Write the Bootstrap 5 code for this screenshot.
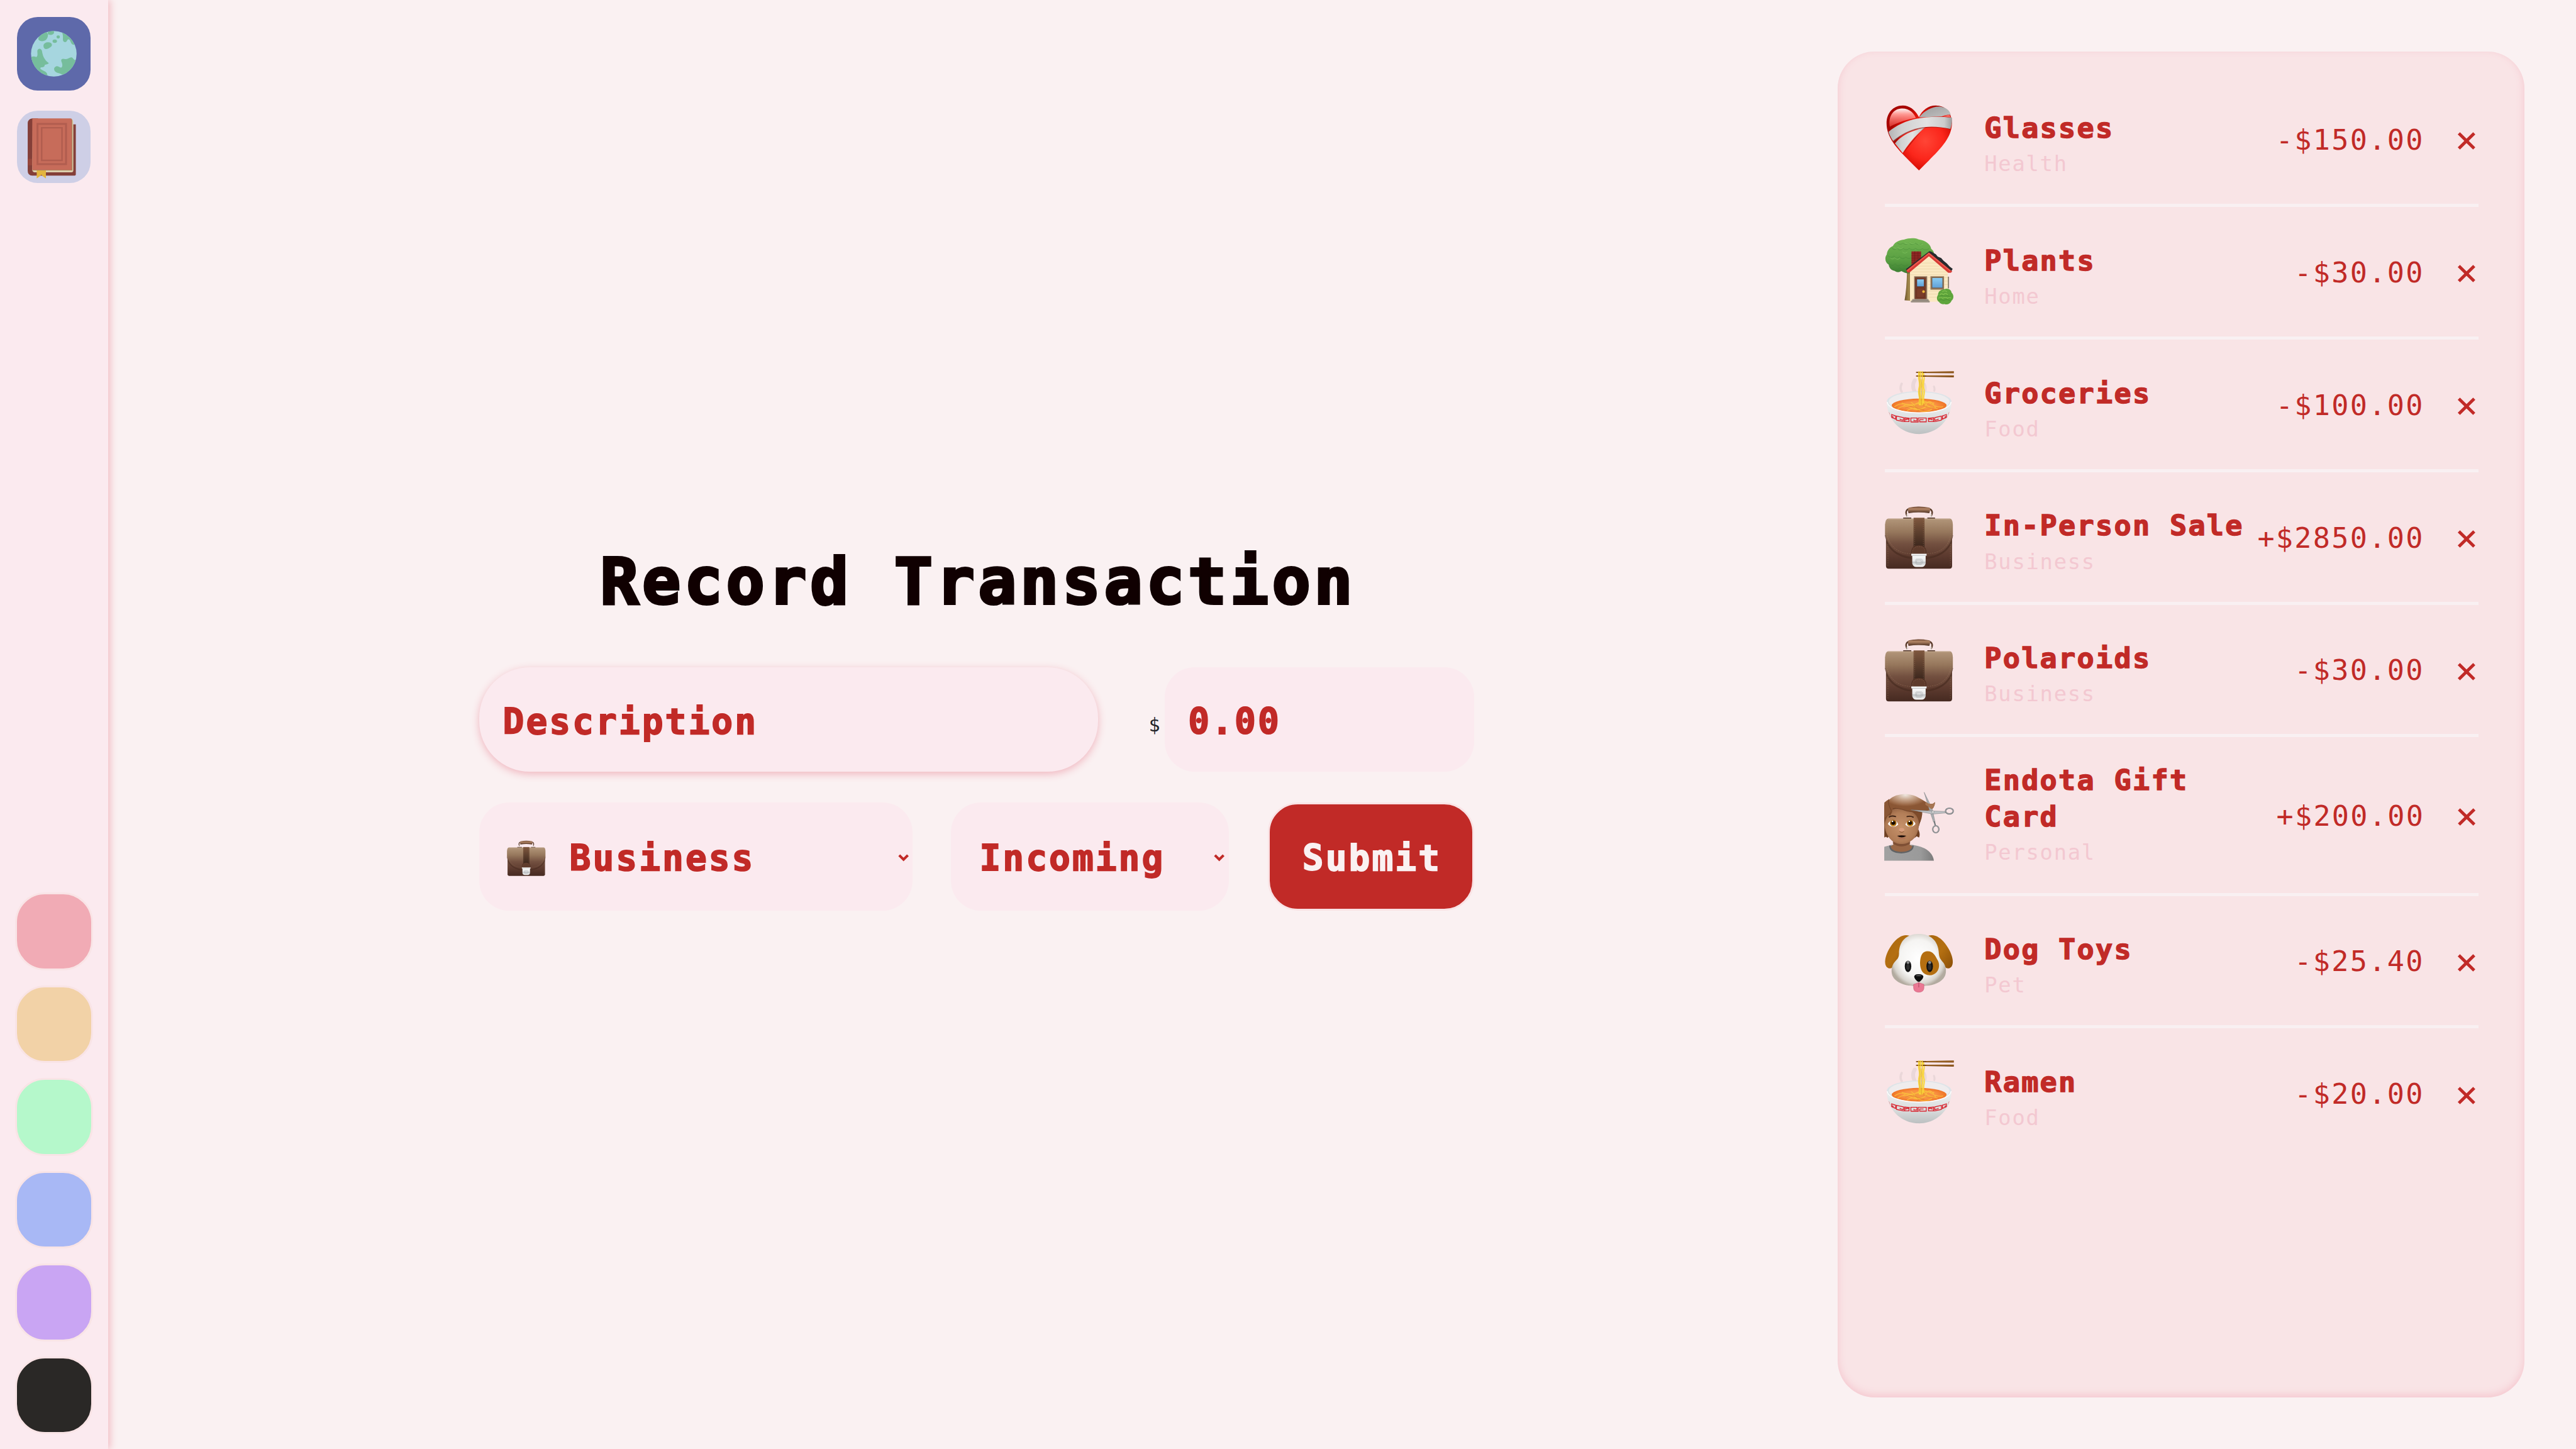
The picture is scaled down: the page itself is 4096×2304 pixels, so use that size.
<!DOCTYPE html>
<html lang="en">
<head>
<meta charset="utf-8">
<title>Record Transaction</title>
<link href="https://cdn.jsdelivr.net/npm/bootstrap@5.3.0/dist/css/bootstrap.min.css" rel="stylesheet">
<style>
:root{--u:calc(4096px / 4480);}
html,body{height:100%;margin:0;overflow:hidden}
body{background:#faf1f2;color:#212529;font-family:"DejaVu Sans Mono","Liberation Mono",monospace}
svg{display:block;overflow:visible}
.ink{color:#c12a27}
.rail{width:calc(188*var(--u));background:#fbeaef;box-shadow:calc(4*var(--u)) 0 calc(12*var(--u)) #f2bdc4;padding:calc(30*var(--u)) 0 calc(26*var(--u))}
.app-tile{width:calc(128*var(--u));height:calc(128*var(--u));border-radius:calc(36*var(--u));margin-bottom:calc(34*var(--u));padding:0;border:0}
.tile-world{background:#5e69aa}
.tile-book{background:#cecfe6;height:calc(126*var(--u))}
.swatches{gap:calc(26.4*var(--u))}
.swatch{width:calc(136*var(--u));height:calc(135*var(--u));border:calc(4*var(--u)) solid #f9e4e6;border-radius:calc(52*var(--u));padding:0}
.stage{padding-left:calc(13*var(--u))}
.entry{width:calc(1730*var(--u))}
.headline{font-size:calc(111.500*var(--u));line-height:calc(152*var(--u));margin:0 0 calc(72*var(--u));padding-left:calc(5*var(--u));color:#100001;font-weight:700;letter-spacing:calc(5.900*var(--u));-webkit-text-stroke:calc(4.500*var(--u)) #100001;white-space:nowrap}
.field,.field:focus{background:#fbeaef;border:0;border-radius:calc(52*var(--u));font-weight:700;font-size:calc(61.500*var(--u));letter-spacing:calc(3.300*var(--u));line-height:1.2;color:#c12a27;-webkit-text-stroke:calc(2*var(--u)) #c12a27;padding:calc(8*var(--u)) calc(41*var(--u)) 0;box-shadow:none}
.field::placeholder{color:#c12a27;opacity:1}
.line-a{height:calc(182*var(--u));margin-bottom:calc(54*var(--u))}
.line-b{height:calc(188*var(--u))}
.f-desc,.f-desc:focus{width:calc(1076*var(--u));border-radius:calc(88*var(--u));box-shadow:0 calc(4*var(--u)) calc(14*var(--u)) #f0b5be}
.f-amt{width:calc(538*var(--u))}
.cur{font-size:calc(33*var(--u));padding-top:calc(20*var(--u));margin-right:calc(8*var(--u))}
.picker{padding:calc(6*var(--u)) calc(7*var(--u)) 0 calc(48*var(--u))}
.f-cat{width:calc(754*var(--u));margin-right:calc(66*var(--u))}
.f-dir{width:calc(484*var(--u));padding-left:calc(50*var(--u))}
.mini{width:calc(68*var(--u));height:calc(68*var(--u));margin-right:calc(41*var(--u));margin-top:calc(-4*var(--u))}
.chev{width:calc(19*var(--u));height:calc(12*var(--u));margin-top:calc(-4*var(--u))}
.send,.send:hover{width:calc(358*var(--u));background:#c12a27;color:#faf1f2;border:calc(4*var(--u)) solid #f9e3e5;border-radius:calc(52*var(--u));font-weight:700;font-size:calc(61.500*var(--u));letter-spacing:calc(3.300*var(--u));-webkit-text-stroke:calc(2*var(--u)) #faf1f2;line-height:1.2;padding:calc(6*var(--u)) 0 0 calc(3*var(--u))}
.ledger{width:calc(1194*var(--u));margin:calc(90*var(--u));margin-left:0;padding:calc(39.4*var(--u)) calc(80*var(--u)) 0 calc(82*var(--u));background:#f9e4e6;border-radius:calc(64*var(--u));box-shadow:inset 0 calc(-4*var(--u)) calc(14*var(--u)) #f5c6ce}
.tx{height:calc(230.6*var(--u));border-bottom:calc(6*var(--u)) solid #f9f0f2}
.tx:last-child{border-bottom-color:transparent}
.tx-tall{height:calc(275.8*var(--u))}
.pic{width:calc(120*var(--u));height:calc(120*var(--u));margin-right:calc(53*var(--u));margin-top:calc(-4*var(--u))}
.what{padding-top:calc(62*var(--u));min-width:0}
.tx-tall .what{padding-top:calc(43.5*var(--u))}
.what-name{font-weight:700;font-size:calc(49.400*var(--u));line-height:calc(63.5*var(--u));letter-spacing:calc(2.500*var(--u));-webkit-text-stroke:calc(1.600*var(--u)) #c12a27}
.what-cat{font-size:calc(37*var(--u));line-height:calc(60.2*var(--u));letter-spacing:calc(1.900*var(--u));color:#f3c8d1}
.sum{font-size:calc(49.400*var(--u));letter-spacing:calc(2.500*var(--u));padding-top:calc(4*var(--u))}
.drop{width:calc(41*var(--u));margin-left:calc(53*var(--u));font-size:calc(67*var(--u));line-height:1;padding-top:calc(3*var(--u));border:0;background:none;padding-left:0;padding-right:0}
</style>
<script src="https://cdn.jsdelivr.net/npm/bootstrap@5.3.0/dist/js/bootstrap.bundle.min.js"></script>
</head>
<body class="d-flex">
<svg width="0" height="0" class="position-absolute" aria-hidden="true">
<defs>
<radialGradient id="gHeart" gradientUnits="userSpaceOnUse" cx="235" cy="225" r="190"><stop offset="0" stop-color="#ff4536"/><stop offset=".5" stop-color="#fb261b"/><stop offset=".8" stop-color="#d80e05"/><stop offset="1" stop-color="#a80500"/></radialGradient>
<linearGradient id="gShine" x1="0" y1="0" x2="0" y2="1"><stop offset="0" stop-color="#fff" stop-opacity=".95"/><stop offset=".3" stop-color="#ff9c96"/><stop offset="1" stop-color="#f8504a" stop-opacity=".6"/></linearGradient>
<linearGradient id="gBand" x1="0" y1="0" x2="1" y2="0"><stop offset="0" stop-color="#b3b3b3"/><stop offset=".2" stop-color="#d0d0d0"/><stop offset=".6" stop-color="#e2e2e2"/><stop offset=".88" stop-color="#cbcbcb"/><stop offset="1" stop-color="#9c9c9c"/></linearGradient>
<linearGradient id="gBand2" x1="0" y1="0" x2="1" y2="1"><stop offset="0" stop-color="#9c9c9c"/><stop offset="1" stop-color="#c2c2c2"/></linearGradient>
<linearGradient id="gTree" x1="0" y1="0" x2="0" y2="1"><stop offset="0" stop-color="#72b551"/><stop offset=".6" stop-color="#5ba043"/><stop offset="1" stop-color="#3b7c31"/></linearGradient>
<linearGradient id="gTrunk" x1="0" y1="0" x2="1" y2="0"><stop offset="0" stop-color="#6b522c"/><stop offset=".5" stop-color="#a3884b"/><stop offset="1" stop-color="#6c5430"/></linearGradient>
<linearGradient id="gPane" x1="0" y1="0" x2="0" y2="1"><stop offset="0" stop-color="#8ccdf3"/><stop offset="1" stop-color="#5f9fd6"/></linearGradient>
<linearGradient id="gBowl" x1="0" y1="0" x2="0" y2="1"><stop offset="0" stop-color="#eef0f1"/><stop offset=".55" stop-color="#dcdfdf"/><stop offset="1" stop-color="#bcc0c1"/></linearGradient>
<radialGradient id="gSoup"><stop offset="0" stop-color="#f39a3f"/><stop offset=".6" stop-color="#f99343"/><stop offset="1" stop-color="#ef7426"/></radialGradient>
<linearGradient id="gFlap" x1="0" y1="0" x2="0" y2="1"><stop offset="0" stop-color="#b2967a"/><stop offset=".35" stop-color="#96775c"/><stop offset=".65" stop-color="#735040"/><stop offset="1" stop-color="#5c3a2e"/></linearGradient>
<linearGradient id="gCase" x1="0" y1="0" x2="0" y2="1"><stop offset="0" stop-color="#7a5a47"/><stop offset=".6" stop-color="#603d31"/><stop offset="1" stop-color="#462a21"/></linearGradient>
<linearGradient id="gStrap" x1="0" y1="0" x2="0" y2="1"><stop offset="0" stop-color="#7f583f"/><stop offset="1" stop-color="#37231a"/></linearGradient>
<linearGradient id="gGrip" x1="0" y1="0" x2="0" y2="1"><stop offset="0" stop-color="#6a4430"/><stop offset=".35" stop-color="#b48666"/><stop offset="1" stop-color="#4d3022"/></linearGradient>
<linearGradient id="gLock" x1="0" y1="0" x2="0" y2="1"><stop offset="0" stop-color="#fff"/><stop offset=".55" stop-color="#e3e5e6"/><stop offset=".6" stop-color="#bfc3c5"/><stop offset="1" stop-color="#fafafa"/></linearGradient>
<radialGradient id="gFace" gradientUnits="userSpaceOnUse" cx="110" cy="220" r="115"><stop offset="0" stop-color="#c6926b"/><stop offset=".65" stop-color="#b27d57"/><stop offset="1" stop-color="#8b5a3c"/></radialGradient>
<radialGradient id="gHair" gradientUnits="userSpaceOnUse" cx="132" cy="52" r="120" gradientTransform="translate(0 26) scale(1 .5)"><stop offset="0" stop-color="#efe7e0"/><stop offset=".4" stop-color="#c9a88f"/><stop offset=".85" stop-color="#9c6a48"/><stop offset="1" stop-color="#8a5634"/></radialGradient>
<linearGradient id="gShirt" x1="0" y1="0" x2="1" y2="0"><stop offset="0" stop-color="#a2a2a2"/><stop offset=".75" stop-color="#9a9a9a"/><stop offset="1" stop-color="#7b7b7b"/></linearGradient>
<radialGradient id="gDog" gradientUnits="userSpaceOnUse" cx="200" cy="905" r="150"><stop offset="0" stop-color="#fff"/><stop offset=".65" stop-color="#f5f4f2"/><stop offset=".88" stop-color="#d9d5cf"/><stop offset="1" stop-color="#b3aba0"/></radialGradient>
<linearGradient id="gEar" x1="0" y1="0" x2="1" y2="1"><stop offset="0" stop-color="#a9680f"/><stop offset=".5" stop-color="#b46f11"/><stop offset="1" stop-color="#8a4f08"/></linearGradient>
<clipPath id="cHead"><path d="M21 0H400V396H21Z"/></clipPath>
<clipPath id="cGlobe"><circle cx="282" cy="282" r="119"/></clipPath>
<clipPath id="cBowl"><path d="M36 205C36 300 110 374 202 374S370 300 370 205C370 240 290 266 202 266S36 240 36 205Z"/></clipPath>

<symbol id="heart" viewBox="24 30 360 360" overflow="visible">
<path fill="url(#gHeart)" d="M202 100C185 65 155 39 118 39C65 39 33 80 33 132C33 222 110 285 202 378C290 288 374 220 374 132C374 75 340 39 290 39C250 39 218 64 202 100Z"/>
<path fill="url(#gShine)" d="M50 150C40 95 70 56 112 55C152 54 174 78 186 104C140 112 92 127 50 150Z"/>
<path fill="#a60b05" d="M68 222L110 192L86 228L73 238Z"/>
<path fill="#f9625a" d="M322 95L362 87L368 101Z"/>
<path fill="url(#gBand2)" d="M203 101C230 64 280 40 318 46C345 50 364 66 368 87C350 88 335 90 322 96Z"/>
<path fill="#8f0800" opacity=".6" d="M118 291C152 236 192 194 234 152L226 158Z"/>
<path fill="url(#gBand)" d="M77 237C110 195 160 170 232 155C190 190 150 232 117 287Z"/>
<path fill="none" stroke="#6a6a6a" stroke-width="3" d="M68 226C110 188 170 160 232 154"/>
<path fill="none" stroke="#9c0d06" stroke-width="3" d="M232 154C280 149 330 151 366 163"/>
<path fill="url(#gBand)" d="M43 177C110 120 210 86 374 102C376 124 372 146 366 161C260 138 160 145 67 224C56 208 48 192 43 177Z"/>
</symbol>

<symbol id="house" viewBox="24 722 360 360" overflow="visible">
<path fill="url(#gTrunk)" d="M140 900H170V1062L127 1058Q138 1000 140 900Z"/>
<path fill="url(#gTree)" d="M75 905C50 900 46 882 44 872C25 862 22 835 34 820C36 795 52 780 66 775C80 750 105 744 124 742C150 732 185 732 205 742C235 746 262 765 266 790C280 800 284 815 278 830L160 916C140 922 125 914 110 906C98 914 85 912 75 905Z"/>
<g fill="none" stroke="#3f8536" stroke-width="3" opacity=".5"><path d="M40 825q15 18 32 2q12 20 30 4q14 18 32 2q12 12 26 4"/><path d="M60 785q14 16 28 2q14 18 32 0q14 16 32 0q16 16 32 0q16 16 36 2q18 12 34 0"/><path d="M48 868q16 16 30 0q14 20 32 2q16 18 36 2"/><path d="M90 760q14 12 28 0q16 14 32 0q16 14 32 0q18 14 34 4"/><path d="M76 900q14 4 24-12q14 16 36 4"/></g>
<path fill="none" stroke="#8bca68" stroke-width="2.500" opacity=".7" d="M70 780q12 14 24 2q14 14 26 0M128 758q14 12 28 0q14 12 26 0M52 836q12 14 24 0q14 16 26 2M196 764q14 10 26 2M116 806q12 12 26 0"/>
<path fill="#8e2823" d="M163 803H213V850L163 884Z"/><path stroke="#6b1a19" stroke-width="2" fill="none" d="M163 814H213M163 826H213M163 838H213M163 850H210M163 862H195M180 803V870M197 803V850"/>
<path fill="#fbe8c2" d="M155 905L254 824L353 905V1066H155Z"/>
<path fill="none" stroke="#e6cf9f" stroke-width="2" d="M212 864H298M192 880H316M174 895H335M157 910H353M157 925H353M250 940H262M335 940H353M250 958H262M335 958H353M250 976H262M335 976H353M250 994H262M250 1010H310M250 1026H300M250 1042H300"/>
<path fill="#8b7c67" d="M353 935H359V996H353Z"/>
<path fill="#262b2e" d="M134 896L256 802L266 804L290 818L300 830L318 838L330 852L348 866L362 882L378 894L370 908L254 818L140 908Z"/>
<path fill="#d83b35" d="M136 902L254 808L376 908L368 915H355L254 829L152 914H142Z"/><path fill="none" stroke="#f0685a" stroke-width="4" d="M142 904L254 814L366 906"/>
<path fill="#8f7259" d="M177 933H245V1053H177Z"/><path fill="#7a3c29" d="M183 940H237V1052H183Z"/><path fill="none" stroke="#5b2b1e" stroke-width="2" d="M190 994H230V1044H190ZM183 940H237V1052H183Z"/>
<path fill="url(#gPane)" stroke="#4c2419" stroke-width="2" d="M191 948H229V987H191Z"/><circle cx="226" cy="1013" r="7" fill="#edb83b"/>
<path fill="#95785a" d="M262 933H333V1003H262Z"/><path fill="url(#gPane)" stroke="#6e5541" stroke-width="3" d="M270 940H326V994H270Z"/>
<path fill="#a0958a" d="M167 1052H252V1060H258V1070H160V1060H167Z"/><path stroke="#746a61" stroke-width="2" d="M165 1060H254"/>
<path fill="#5fa53c" d="M308 1068C292 1058 294 1040 302 1030C300 1012 320 1000 336 1000C352 992 372 1004 372 1018C386 1030 384 1052 372 1060C368 1076 346 1084 336 1078C324 1080 312 1076 308 1068Z"/>
<path fill="none" stroke="#8fcc57" stroke-width="4" opacity=".8" d="M310 1030q10-12 20 0q10-14 22 0M304 1048q12-12 22 0q14-12 26 0q10-10 18 0M324 1014q12-10 24 0"/><path fill="none" stroke="#3b7d2b" stroke-width="3" opacity=".6" d="M304 1060q14-10 26 0q14-10 34 0M312 1038q14-10 26 0q12-8 26 2"/>
</symbol>

<symbol id="ramen" viewBox="24 34 360 360" overflow="visible">
<g fill="none" stroke="#8c8589" stroke-linecap="round" opacity=".13"><path stroke-width="12" d="M112 155q-12-18 0-42"/><path stroke-width="20" d="M178 150q-14-28 2-55"/><path stroke-width="10" d="M236 150q4-20-4-36M282 150q4-10-2-22"/></g>
<ellipse cx="203" cy="207" rx="169" ry="55" fill="#dde4e8"/>
<ellipse cx="203" cy="206" rx="158" ry="49" fill="#efeced"/>
<ellipse cx="203" cy="227" rx="143" ry="36" fill="url(#gSoup)"/>
<g fill="none" stroke="#fbc93c" stroke-width="4" opacity=".75"><path d="M74 234q30-24 60-12t60-8t70 4t64 14M90 244q40-26 70-6t60 4t80 2M112 214q40 16 80 4t90-4M140 254q30-22 60-4t70-4M120 230q20-20 60 6t60-14t50 20M160 210q24 10 20 40M226 210q20 26 60 30"/></g>
<g fill="none" stroke="#c8621d" stroke-width="2" opacity=".6"><path d="M130 240q40-20 70 8M214 220q30 26 70 18M170 225q20 20 60 24M190 258q14-12 40-4"/></g>
<path fill="url(#gBowl)" d="M34 205C34 302 108 376 202 376S372 302 372 205C370 244 292 268 202 268S38 244 34 205Z"/>
<path fill="none" stroke="#fbfcfc" stroke-width="5" d="M36 208C42 244 118 265 202 265S366 244 370 208"/>
<g fill="none" stroke="#d9232e" stroke-width="4.500" clip-path="url(#cBowl)">
<path d="M160 314V292H192V306H176V301M160 313H198V292M198 292H240V312H206V301H226"/>
<path d="M84 303L85 282L122 290V304L104 300V296M84 303L122 311H150V298H134V304M128 311V291L154 294"/>
<path d="M320 303L319 282L284 290V304L302 300V296M320 303L284 311H252V298H270V304M278 311V291L248 294"/>
<path d="M44 262L52 286L80 298V281L60 274V284L70 288M361 262L353 286L325 298V281L345 274V284L335 288"/>
</g>
<path fill="none" stroke="#e5a91f" stroke-width="30" opacity=".3" d="M216 90V225"/>
<g fill="none" stroke="#fbd83a" stroke-width="5.500"><path d="M202 50q-5 20 0 45t0 40t2 50v40"/><path d="M210 50q-6 20 0 45t0 40t0 45v46"/><path d="M219 50q5 24 2 45t0 40t-2 45v46"/><path d="M222 50q12 25 6 48t0 40t-2 45v34"/></g>
<path fill="none" stroke="#c9901b" stroke-width="1.500" d="M206 60q-5 18 0 40t0 38t1 45v34M215 60v40q4 20 0 40v80"/>
<path fill="#7b4611" d="M187 51L384 48V59L187 57ZM187 70L384 69V80L187 76Z"/><path stroke="#b98036" stroke-width="2.500" d="M240 52.500H384M240 72.500H384"/>
<path stroke="#fbd83a" stroke-width="5" d="M202 48V80M210 48V80M219 48V80"/>
</symbol>

<symbol id="case" viewBox="24 728 360 360" overflow="visible">
<path fill="none" stroke="#5b3c2b" stroke-width="8" d="M141 806C128 785 138 770 150 768M265 806C278 785 268 770 256 768"/>
<path fill="#4a3023" d="M120 813H162V820H120ZM246 813H286V820H246Z"/><path stroke="#e3ded8" stroke-width="6" d="M141 794V812M265 794V812"/>
<path fill="url(#gGrip)" d="M148 762Q202 750 258 762Q263 776 256 790Q202 782 148 790Q142 776 148 762Z"/>
<path fill="url(#gCase)" d="M30 880H375V1066Q375 1080 361 1080H44Q30 1080 30 1066Z"/>
<path fill="#3b2319" opacity=".45" d="M31 930C70 1000 120 1024 203 1024S336 1000 374 930V945C340 1010 280 1030 203 1030S66 1010 31 945Z"/>
<path fill="url(#gFlap)" d="M42 818H364Q378 820 379 850V900C376 940 350 975 320 995C280 1016 240 1020 203 1020S126 1016 86 995C56 975 30 940 25 900V850Q27 820 42 818Z"/>
<path fill="none" stroke="#4a2d21" stroke-width="2" d="M25 905C32 940 56 975 86 995C126 1016 166 1020 203 1020S280 1016 320 995C350 975 374 940 379 905"/>
<path fill="none" stroke="#b79474" stroke-width="2" stroke-dasharray="7 5" opacity=".5" d="M36 826V905C46 950 76 980 110 993C150 1008 250 1008 296 993C330 980 360 950 368 905V826M40 950V1066M366 950V1066"/>
<path fill="#d9c1a5" opacity=".5" d="M40 819H366V822H40Z"/>
<path fill="url(#gStrap)" d="M174 814H231V975H174Z"/><path fill="none" stroke="#b08a68" stroke-width="2" stroke-dasharray="6 5" opacity=".6" d="M180 824V966M225 824V966"/>
<path fill="#5e3b2c" stroke="#482a1f" stroke-width="2" d="M164 1004V985Q168 958 202 958Q234 958 239 985V1004Z"/><path fill="none" stroke="#9a755a" stroke-width="2" stroke-dasharray="6 5" opacity=".6" d="M170 1000V986Q176 965 202 965Q228 965 233 986V1000"/>
<path fill="url(#gLock)" d="M167 1006H237V1052Q234 1071 215 1071H189Q170 1071 167 1052Z"/><path fill="#f4f4f4" d="M162 1002H242V1012H162Z"/><path fill="none" stroke="#a1a5a7" stroke-width="2" d="M167 1012H237M188 1030H216L221 1036V1050L214 1058H190L184 1050V1036ZM190 1036H214V1052H190Z"/>
</symbol>

<symbol id="haircut" viewBox="24 -30 360 360" overflow="visible">
<g clip-path="url(#cHead)">
<path fill="#6f4023" d="M21 110H214Q214 200 196 226Q212 258 202 274L190 268L180 276L170 262H50L38 276L30 270L21 274Z"/>
<path fill="url(#gShirt)" d="M0 396V328Q40 318 58 312H166Q230 322 256 348Q278 370 280 396Z"/>
<path fill="#9a6746" d="M68 285H154V312L172 322Q164 350 110 352Q56 350 50 322L68 312Z"/>
<path fill="none" stroke="#616365" stroke-width="8" d="M51 316Q50 350 110 353Q170 350 171 316"/>
<path fill="#6c3f28" opacity=".6" d="M66 290Q110 326 156 290V306Q110 334 66 306Z"/>
<path fill="url(#gFace)" d="M21 150Q110 90 200 150Q212 230 180 275Q150 308 112 308Q64 308 38 262Q24 240 21 200Z"/>
<path fill="#7d4b2b" d="M21 104Q45 90 60 95L62 140L54 158L40 160Q26 180 21 210ZM166 130H220Q220 182 202 205Q202 164 166 140Z"/>
<path fill="url(#gHair)" d="M42 84C60 55 105 46 140 48C190 52 220 80 252 96Q272 104 286 90Q284 122 262 132C215 142 170 144 140 136C110 126 80 116 66 124L60 138Q44 120 42 84Z"/>
<path fill="#8a5635" d="M21 92Q32 82 46 74Q40 104 58 134L48 150L30 166L21 172Z"/><path fill="none" stroke="#6d4126" stroke-width="3" d="M46 74Q38 100 58 134M66 124Q84 116 140 136Q180 144 214 140"/>
</g>
<path fill="none" stroke="#3c2114" stroke-width="6" stroke-linecap="round" d="M47 167Q60 158 80 165M140 165Q158 160 172 168"/>
<path fill="#fff" d="M40 203Q50 184 70 183Q88 187 94 206Q84 218 66 218Q48 216 40 203ZM131 206Q140 186 158 183Q178 186 184 203Q176 216 158 218Q140 218 131 206Z"/>
<circle cx="68" cy="199" r="17" fill="#9a5d08"/><circle cx="156" cy="199" r="17" fill="#9a5d08"/><circle cx="68" cy="198" r="10" fill="#140a02"/><circle cx="156" cy="198" r="10" fill="#140a02"/><circle cx="64" cy="190" r="4" fill="#fff"/><circle cx="152" cy="190" r="4" fill="#fff"/><path fill="none" stroke="#e0a02c" stroke-width="4" d="M58 209Q68 217 78 208M146 209Q156 217 166 208"/>
<ellipse cx="112" cy="234" rx="14" ry="10" fill="#d79c7c"/><path fill="none" stroke="#87502f" stroke-width="3" d="M100 242Q112 252 124 242"/>
<path fill="#1c0c08" d="M88 265Q112 260 136 265Q112 282 88 265Z"/><path fill="none" stroke="#b06e57" stroke-width="4" d="M94 276Q112 286 132 275"/>
<path fill="#a9adb0" stroke="#6e7275" stroke-width="1.500" d="M229 38L270 120L286 192L278 194L256 128Z"/>
<path fill="#a67552" d="M236 90L252 96Q272 104 286 90Q284 118 266 126Q250 110 236 104Z"/>
<path fill="#bdc1c4" stroke="#6e7275" stroke-width="1.500" d="M160 130L276 136L340 138V146L274 152Q210 140 160 130Z"/>
<circle cx="275" cy="141" r="6" fill="#e7e9ea" stroke="#777" stroke-width="2"/>
<ellipse cx="361" cy="136" rx="20" ry="15" fill="none" stroke="#74787b" stroke-width="7"/><ellipse cx="290" cy="231" rx="16" ry="18" fill="none" stroke="#74787b" stroke-width="7"/><path stroke="#74787b" stroke-width="7" d="M282 190L288 214"/>
<ellipse cx="361" cy="135" rx="20" ry="15" fill="none" stroke="#c3c6c8" stroke-width="2"/><ellipse cx="290" cy="230" rx="16" ry="18" fill="none" stroke="#c3c6c8" stroke-width="2"/>
</symbol>

<symbol id="dog" viewBox="24 731 360 360" overflow="visible">
<path fill="url(#gEar)" d="M152 786C120 776 90 796 66 826C38 862 20 906 27 936C33 958 52 960 62 953L112 900Z"/>
<path fill="url(#gEar)" d="M252 786C284 776 314 796 338 826C366 862 384 906 377 936C371 958 352 960 342 953L292 900Z"/>
<path fill="url(#gDog)" d="M201 777C262 777 304 812 306 880C308 905 320 915 332 930C344 948 346 975 338 996C322 1030 276 1046 240 1047C220 1053 180 1053 162 1047C126 1046 80 1030 64 996C56 975 58 948 70 930C84 912 98 905 98 880C98 812 140 777 201 777Z"/>
<path fill="#b46f11" d="M246 867C282 867 290 900 302 918C316 950 300 990 258 993C220 992 206 960 208 922C210 888 222 867 246 867Z"/>
<ellipse cx="145" cy="946" rx="17" ry="30" fill="#111"/><ellipse cx="258" cy="946" rx="17" ry="30" fill="#111"/><ellipse cx="145" cy="926" rx="8" ry="8" fill="#8c8c8c"/><ellipse cx="258" cy="926" rx="8" ry="8" fill="#8c8c8c"/><ellipse cx="145" cy="950" rx="9" ry="16" fill="#2e2e2e"/><ellipse cx="258" cy="950" rx="9" ry="16" fill="#2e2e2e"/>
<path fill="#ea7893" stroke="#c95b77" stroke-width="2" d="M174 1040Q188 1036 201 1030Q214 1036 228 1040V1060Q226 1081 201 1081Q176 1081 174 1060Z"/><path stroke="#b94f69" stroke-width="4" fill="none" d="M201 1032V1056"/>
<path fill="#0d0d0d" d="M177 999Q180 987 201 987Q222 987 225 999Q224 1010 208 1025Q201 1030 194 1025Q178 1010 177 999Z"/><path fill="#5a5a5a" d="M184 996Q201 986 218 996Q201 1000 184 996Z"/>
</symbol>
</defs>
</svg>

<nav class="rail d-flex flex-column align-items-center flex-shrink-0 h-100">
  <button class="app-tile tile-world d-flex align-items-center justify-content-center" aria-label="World">
    <svg style="width:62.5%" viewBox="162 162 240 240"><circle cx="282" cy="282" r="119" fill="#a6d6df"/>
    <g clip-path="url(#cGlobe)" fill="#76bd9c"><path d="M150 310C165 294 180 294 190 299C200 296 196 280 196 266C198 254 214 250 220 266C224 290 230 312 256 330C252 338 240 336 234 340C236 350 226 352 214 353C206 360 220 366 232 372C244 378 250 384 248 400H150Z"/><path d="M202 208C198 200 210 180 230 165H250C253 185 252 196 243 207C232 219 208 218 202 208ZM246 172C254 190 282 184 283 172V160H250Z"/><path d="M228 240C228 226 244 220 256 222C270 224 276 234 270 242C262 250 250 257 240 257C232 256 228 250 228 240Z"/><ellipse cx="287" cy="216" rx="11.500" ry="9"/><ellipse cx="305" cy="194" rx="8.500" ry="8"/><path d="M322 165C334 184 328 200 330 212C334 224 348 224 352 211C358 202 366 208 370 220C374 232 384 240 398 232L380 170Z"/><path d="M400 316C388 318 384 306 376 301C366 298 356 310 342 310C330 306 318 308 321 320C326 332 330 346 322 353C314 356 308 347 298 347C286 349 280 360 286 370C296 384 316 382 330 392L400 380Z"/></g></svg>
  </button>
  <button class="app-tile tile-book" aria-label="Ledger">
    <svg class="w-100 h-100" viewBox="90 576 384 378"><path fill="#843f38" d="M170 616H200V647H397V909Q397 915 391 915H170Q146 913 146 890V640Q148 618 170 616Z"/><path fill="#96463b" d="M146 827H170V861H146Z"/><path fill="#dccfad" d="M172 620H376Q384 624 384 634V888Q384 898 374 898H180Q172 896 170 888Z"/><path fill="#a58a5e" d="M372 616Q378 618 379 628V888H172V884H372Z"/><path fill="#c76c5a" d="M170 616H370Q376 618 376 624V885H170Z"/><path fill="none" stroke="#b15d4f" stroke-width="10" d="M197 645H346V855H197Z"/><path fill="none" stroke="#b15d4f" stroke-width="8" d="M219 665H325V835H219Z"/><path fill="#e3b53f" d="M193 888H241V930L217 912L193 930Z"/><path fill="#843f38" d="M213 914Q217 908 222 914Z"/></svg>
  </button>
  <div class="swatches d-flex flex-column mt-auto">
    <button class="swatch" style="background:#f1abb5" aria-label="Rose"></button>
    <button class="swatch" style="background:#f2d2a7" aria-label="Sand"></button>
    <button class="swatch" style="background:#b5f8cb" aria-label="Mint"></button>
    <button class="swatch" style="background:#a8b8f5" aria-label="Sky"></button>
    <button class="swatch" style="background:#c9a5f3" aria-label="Lilac"></button>
    <button class="swatch" style="background:#2a2826" aria-label="Dark"></button>
  </div>
</nav>

<main class="stage flex-fill d-flex flex-column align-items-center justify-content-center h-100">
  <form class="entry">
    <h1 class="headline text-center">Record Transaction</h1>
    <div class="line-a d-flex align-items-stretch">
      <input class="field f-desc form-control" type="text" placeholder="Description">
      <div class="d-flex align-items-center ms-auto h-100">
        <span class="cur">$</span>
        <input class="field f-amt form-control h-100" type="text" placeholder="0.00">
      </div>
    </div>
    <div class="line-b d-flex align-items-stretch">
      <button type="button" class="field picker f-cat d-flex align-items-center">
        <svg class="mini"><use href="#case"/></svg>Business
        <svg class="chev ms-auto" viewBox="0 0 19 12"><path d="M2 2L9.500 9.500L17 2" fill="none" stroke="#c12a27" stroke-width="4.500"/></svg>
      </button>
      <button type="button" class="field picker f-dir d-flex align-items-center">Incoming
        <svg class="chev ms-auto" viewBox="0 0 19 12"><path d="M2 2L9.500 9.500L17 2" fill="none" stroke="#c12a27" stroke-width="4.500"/></svg>
      </button>
      <button type="button" class="send ms-auto">Submit</button>
    </div>
  </form>
</main>

<aside class="ledger ink flex-shrink-0">
  <div class="tx d-flex align-items-center"><svg class="pic flex-shrink-0"><use href="#heart"/></svg><div class="what flex-fill align-self-start"><div class="what-name">Glasses</div><div class="what-cat">Health</div></div><div class="sum text-nowrap">-$150.00</div><button class="drop ink">×</button></div>
  <div class="tx d-flex align-items-center"><svg class="pic flex-shrink-0"><use href="#house"/></svg><div class="what flex-fill align-self-start"><div class="what-name">Plants</div><div class="what-cat">Home</div></div><div class="sum text-nowrap">-$30.00</div><button class="drop ink">×</button></div>
  <div class="tx d-flex align-items-center"><svg class="pic flex-shrink-0"><use href="#ramen"/></svg><div class="what flex-fill align-self-start"><div class="what-name">Groceries</div><div class="what-cat">Food</div></div><div class="sum text-nowrap">-$100.00</div><button class="drop ink">×</button></div>
  <div class="tx d-flex align-items-center"><svg class="pic flex-shrink-0"><use href="#case"/></svg><div class="what flex-fill align-self-start"><div class="what-name">In-Person Sale</div><div class="what-cat">Business</div></div><div class="sum text-nowrap">+$2850.00</div><button class="drop ink">×</button></div>
  <div class="tx d-flex align-items-center"><svg class="pic flex-shrink-0"><use href="#case"/></svg><div class="what flex-fill align-self-start"><div class="what-name">Polaroids</div><div class="what-cat">Business</div></div><div class="sum text-nowrap">-$30.00</div><button class="drop ink">×</button></div>
  <div class="tx tx-tall d-flex align-items-center"><svg class="pic flex-shrink-0"><use href="#haircut"/></svg><div class="what flex-fill align-self-start"><div class="what-name">Endota Gift Card</div><div class="what-cat">Personal</div></div><div class="sum text-nowrap">+$200.00</div><button class="drop ink">×</button></div>
  <div class="tx d-flex align-items-center"><svg class="pic flex-shrink-0"><use href="#dog"/></svg><div class="what flex-fill align-self-start"><div class="what-name">Dog Toys</div><div class="what-cat">Pet</div></div><div class="sum text-nowrap">-$25.40</div><button class="drop ink">×</button></div>
  <div class="tx d-flex align-items-center"><svg class="pic flex-shrink-0"><use href="#ramen"/></svg><div class="what flex-fill align-self-start"><div class="what-name">Ramen</div><div class="what-cat">Food</div></div><div class="sum text-nowrap">-$20.00</div><button class="drop ink">×</button></div>
</aside>
</body>
</html>
